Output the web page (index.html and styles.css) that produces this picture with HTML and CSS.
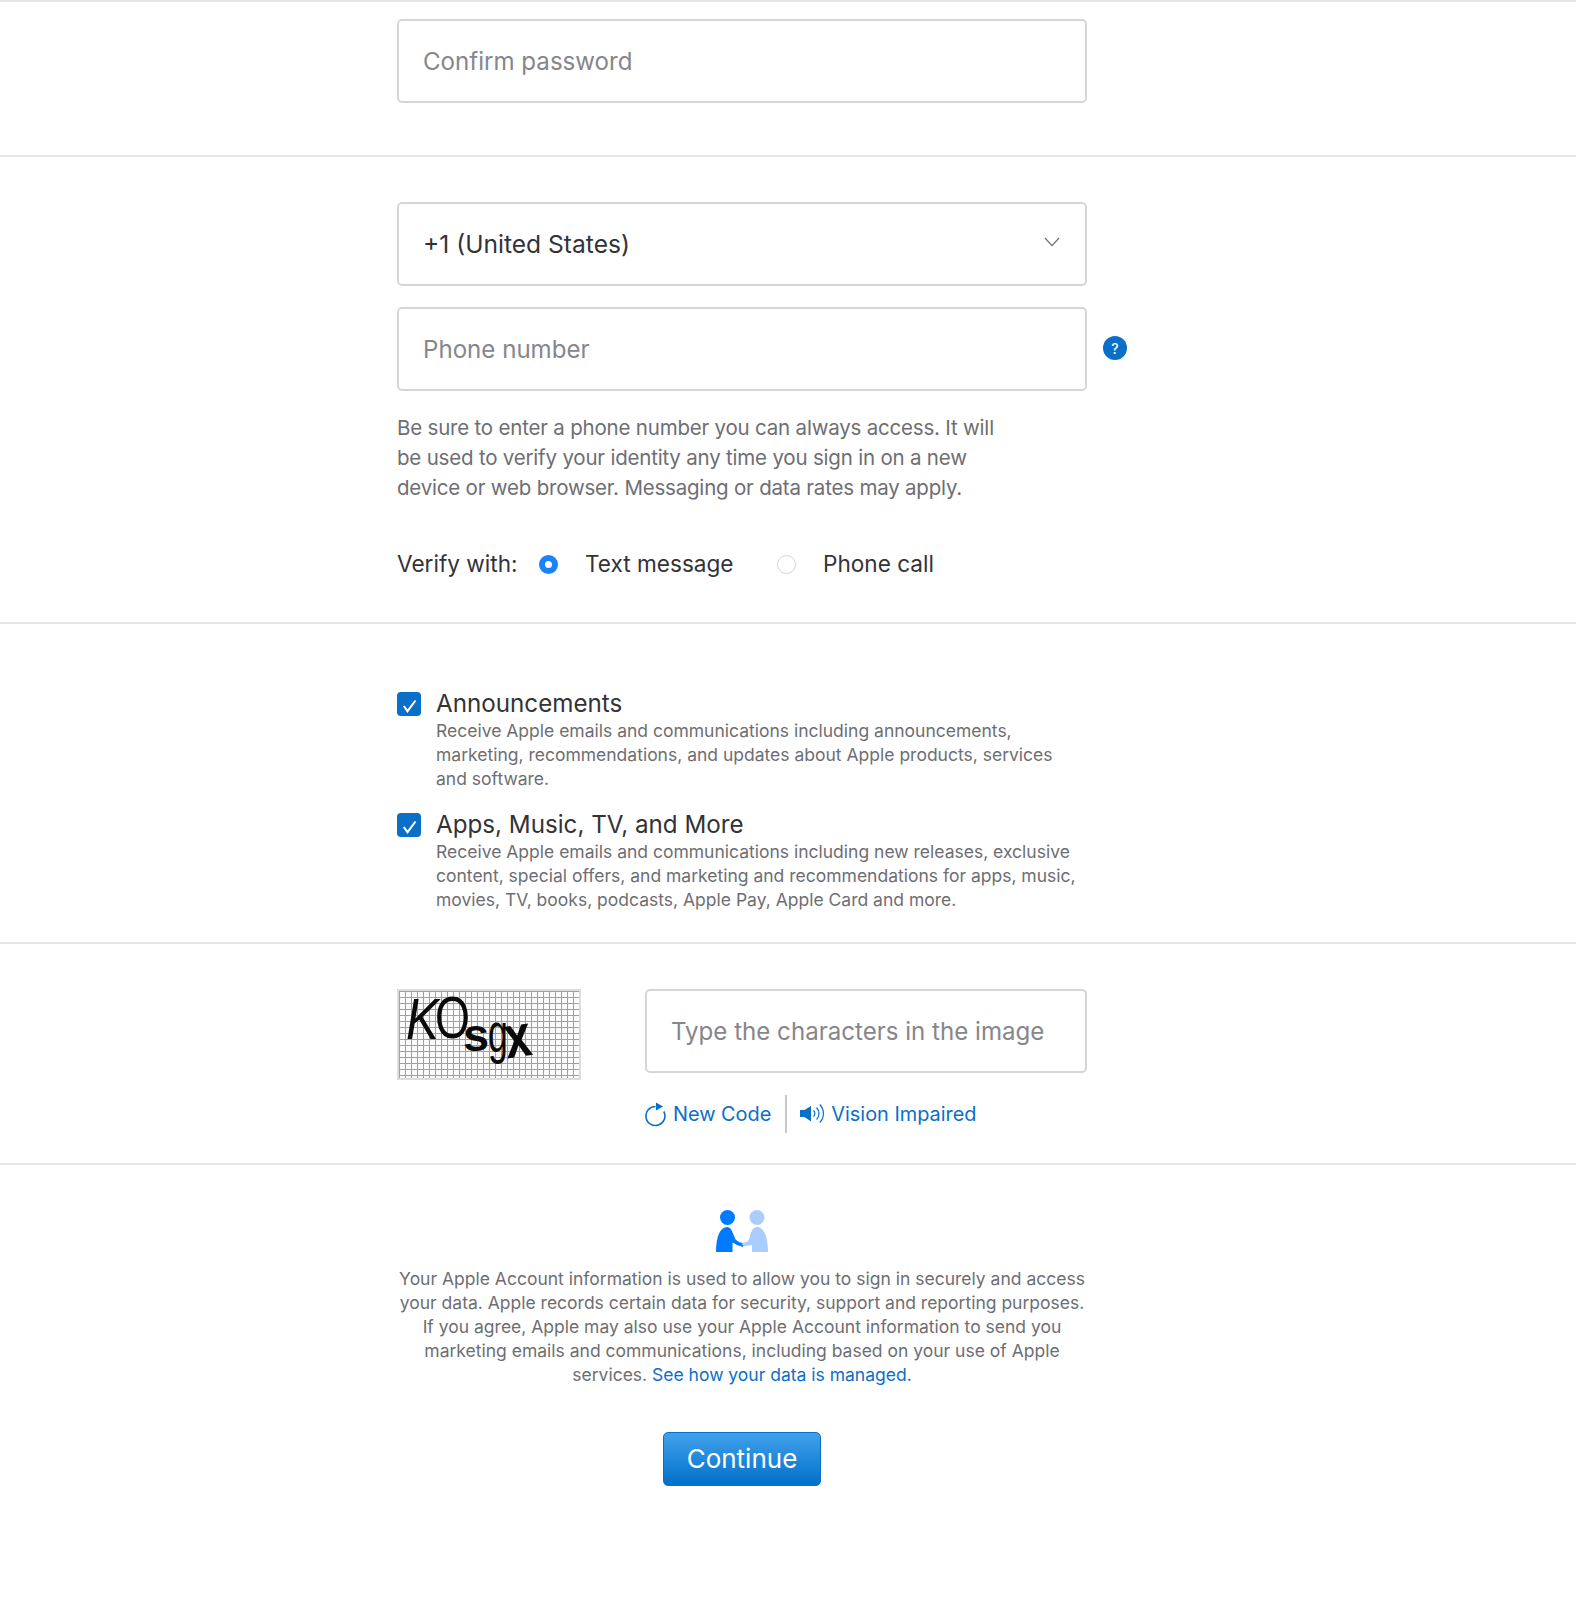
FILE: index.html
```html
<!DOCTYPE html>
<html lang="en">
<head>
    <meta charset="UTF-8">
    <title>Create Your Apple Account</title>
    <link rel="stylesheet" href="styles.css">
</head>
<body>
    <section class="section section-password">
        <div class="wrap">
            <div class="field placeholder">Confirm password</div>
        </div>
    </section>

    <section class="section section-phone">
        <div class="wrap">
            <div class="field select">
                <span>+1 (United States)</span>
                <svg class="chevron" width="16" height="10" viewBox="0 0 16 10"><path d="M1 1l7 7.6L15 1" fill="none" stroke="#6e6e73" stroke-width="1.2"/></svg>
            </div>
            <div class="phone-row">
                <div class="field placeholder">Phone number</div>
                <span class="help-icon">?</span>
            </div>
            <p class="help-text">Be sure to enter a phone number you can always access. It will be used to verify your identity any time you sign in on a new device or web browser. Messaging or data rates may apply.</p>
            <div class="verify">
                <span class="verify-label">Verify with:</span>
                <span class="radio radio-on"></span>
                <span class="radio-label">Text message</span>
                <span class="radio"></span>
                <span class="radio-label">Phone call</span>
            </div>
        </div>
    </section>

    <section class="section section-prefs">
        <div class="wrap">
            <div class="pref">
                <span class="checkbox">
                    <svg width="24" height="24" viewBox="0 0 24 24"><path d="M6.8 14l3.7 5.2 8-10.700" fill="none" stroke="#fff" stroke-width="2"/></svg>
                </span>
                <div class="pref-body">
                    <div class="pref-title">Announcements</div>
                    <div class="pref-text">Receive Apple emails and communications including announcements, marketing, recommendations, and updates about Apple products, services and software.</div>
                </div>
            </div>
            <div class="pref">
                <span class="checkbox">
                    <svg width="24" height="24" viewBox="0 0 24 24"><path d="M6.8 14l3.7 5.2 8-10.700" fill="none" stroke="#fff" stroke-width="2"/></svg>
                </span>
                <div class="pref-body">
                    <div class="pref-title">Apps, Music, TV, and More</div>
                    <div class="pref-text">Receive Apple emails and communications including new releases, exclusive content, special offers, and marketing and recommendations for apps, music, movies, TV, books, podcasts, Apple Pay, Apple Card and more.</div>
                </div>
            </div>
        </div>
    </section>

    <section class="section section-captcha">
        <div class="wrap captcha-row">
            <div class="captcha-image">
                <span class="cap cap-k">K</span>
                <span class="cap cap-o">O</span>
                <span class="cap cap-s">s</span>
                <span class="cap cap-g">g</span>
                <span class="cap cap-x">x</span>
            </div>
            <div class="captcha-side">
                <div class="field placeholder">Type the characters in the image</div>
                <div class="captcha-links">
                    <a class="link-item link-new">
                        <svg width="22" height="25" viewBox="0 0 22 25"><path d="M10.500 4.500A9.500 9.500 0 1 0 18.800 9.500" fill="none" stroke="#0a6fc9" stroke-width="1.600"/><path d="M11 0.500l7 4-7 4z" fill="#0a6fc9"/></svg>
                        New Code
                    </a>
                    <a class="link-item link-vision">
                        <svg width="25" height="22" viewBox="0 0 25 22"><path d="M0 7h4.500L11 3v15.500L4.500 14H0z" fill="#0a6fc9"/><g fill="none" stroke="#0a6fc9" stroke-width="1.200"><path d="M13.500 7.500a4 4 0 0 1 0 6"/><path d="M16.500 4.500a8.500 8.500 0 0 1 0 12"/><path d="M19.800 1.500a13 13 0 0 1 0 18"/></g></svg>
                        Vision Impaired
                    </a>
                </div>
            </div>
        </div>
    </section>

    <section class="section-privacy">
        <div class="wrap privacy">
            <svg class="privacy-icon" width="52" height="42" viewBox="0 0 52 42">
                <circle cx="11.500" cy="7.500" r="7.500" fill="#007aff"/>
                <circle cx="41" cy="7.500" r="7.500" fill="#a9cdfd"/>
                <path d="M11 17c-6.500 0-11 9-11 25h16.500V32.500l4.500 2.500 6 2 1-3.500c-3-1-7-1.500-9-5-2-5-3.500-11.500-8-11.500z" fill="#007aff"/>
                <path d="M41 17c6.500 0 11 9 11 25H36V35l-7 1-4-2 5-2c3-1 2.500-1.500 3.500-4 1.500-6 3-11 7.500-11z" fill="#a9cdfd"/>
            </svg>
            <p class="privacy-text">Your Apple Account information is used to allow you to sign in securely and access your data. Apple records certain data for security, support and reporting purposes. If you agree, Apple may also use your Apple Account information to send you marketing emails and communications, including based on your use of Apple services. <a class="link">See how your data is managed.</a></p>
            <button class="continue">Continue</button>
        </div>
    </section>
</body>
</html>
```

FILE: styles.css
```css
* {
    box-sizing: border-box;
}
body {
    margin: 0;
    height: 1604px;
    overflow: hidden;
    background-color: white;
    color: #333336;
    font-family: Inter, "Liberation Sans", sans-serif;
}
.section {
    border-top: 2px solid #e6e6e6;
}
.wrap {
    width: 690px;
    margin-left: 397px;
}
.section-password {
    height: 155px;
    padding-top: 17px;
}
.section-phone {
    height: 467px;
    padding-top: 45px;
}
.section-prefs {
    height: 320px;
    padding-top: 67px;
}
.section-captcha {
    height: 221px;
    padding-top: 45px;
}
.section-privacy {
    border-top: 2px solid #e6e6e6;
    padding-top: 45px;
}
.field {
    height: 84px;
    padding: 0 24px;
    display: flex;
    align-items: center;
    border: 2px solid #d6d6d6;
    border-radius: 5px;
    font-size: 24.100px;
    background-color: white;
}
.placeholder {
    color: #86868b;
}
.select {
    justify-content: space-between;
    padding-right: 25px;
    color: #333336;
    font-size: 24.600px;
}
.chevron {
    margin-top: -4px;
}
.phone-row {
    position: relative;
    margin-top: 21px;
}
.help-icon {
    position: absolute;
    left: 706px;
    top: 29px;
    width: 24px;
    height: 24px;
    border-radius: 50%;
    background-color: #0a6fc9;
    color: white;
    font-size: 14px;
    font-weight: 500;
    display: flex;
    align-items: center;
    justify-content: center;
}
.help-text {
    width: 610px;
    margin: 22px 0 0;
    font-size: 20.500px;
    letter-spacing: -0.200px;
    line-height: 30px;
    color: #6e6e73;
}
.verify {
    display: flex;
    align-items: center;
    margin-top: 45px;
    height: 30px;
    font-size: 22.600px;
}
.verify-label {
    width: 142px;
}
.radio {
    flex: none;
    width: 19px;
    height: 19px;
    margin-top: 2px;
    border-radius: 50%;
    border: 1.500px solid #d6d6d6;
}
.radio-on {
    border: 6px solid #1a82fb;
}
.radio-label {
    margin-left: 27px;
    width: 192px;
}
.pref {
    display: flex;
    margin-bottom: 21px;
}
.checkbox {
    flex: none;
    width: 24px;
    height: 24px;
    margin-top: 1px;
    margin-right: 15px;
    border-radius: 4px;
    background-color: #0a6fc9;
}
.checkbox svg {
    display: block;
}
.pref-title {
    font-size: 24.200px;
    line-height: 26px;
    margin-bottom: 2px;
}
.pref-text {
    font-size: 17.500px;
    line-height: 24px;
    color: #6e6e73;
}
.captcha-row {
    display: flex;
    justify-content: space-between;
}
/* the picture's grid is finer than anything worth an svg */
.captcha-image {
    position: relative;
    width: 184px;
    height: 91px;
    overflow: hidden;
    border: 2px solid #dcdcdc;
    background-color: #fbfbfb;
    background-image:
        linear-gradient(#a0a0a0 1.200px, transparent 1.200px),
        linear-gradient(90deg, #a0a0a0 1.200px, transparent 1.200px);
    background-size: 6px 6px;
}
.cap {
    position: absolute;
    color: #0a0a0a;
    font-family: "Liberation Sans", sans-serif;
    line-height: 0.750;
    transform-origin: left top;
}
.cap-k {
    left: 7px;
    top: 6px;
    font-size: 58px;
    font-style: italic;
    transform: scaleX(0.850);
}
.cap-o {
    left: 36px;
    top: 4px;
    font-size: 60px;
    transform: scaleX(0.750);
}
.cap-s {
    left: 64px;
    top: 26px;
    font-size: 47px;
    font-weight: bold;
}
.cap-g {
    left: 89px;
    top: 22px;
    font-size: 55px;
    transform: scaleX(0.650);
}
.cap-x {
    left: 102px;
    top: 25px;
    font-size: 60px;
    font-weight: bold;
    transform: rotate(-8deg) scaleX(0.800);
}
.captcha-side {
    width: 442px;
}
.captcha-links {
    display: flex;
    align-items: center;
    margin-top: 22px;
    height: 38px;
    font-size: 19.900px;
    color: #0a6fc9;
}
.link-item {
    display: flex;
    align-items: center;
    gap: 6px;
}
.link-new {
    padding-right: 14px;
    height: 38px;
    border-right: 2px solid #c8c8cc;
}
.link-vision {
    padding-left: 13px;
}
.privacy {
    display: flex;
    flex-direction: column;
    align-items: center;
}
.privacy-icon {
    display: block;
}
.privacy-text {
    margin: 15px 0 0;
    width: 692px;
    text-align: center;
    font-size: 17.500px;
    line-height: 24px;
    color: #6e6e73;
}
.link {
    color: #0a6fc9;
}
.continue {
    margin-top: 45px;
    width: 158px;
    height: 54px;
    padding: 0 0 2px;
    border: 1px solid #0a6fc9;
    border-radius: 5px;
    background-image: linear-gradient(#42a1ec, #0070c9);
    color: white;
    font-family: inherit;
    font-size: 26px;
}
```
